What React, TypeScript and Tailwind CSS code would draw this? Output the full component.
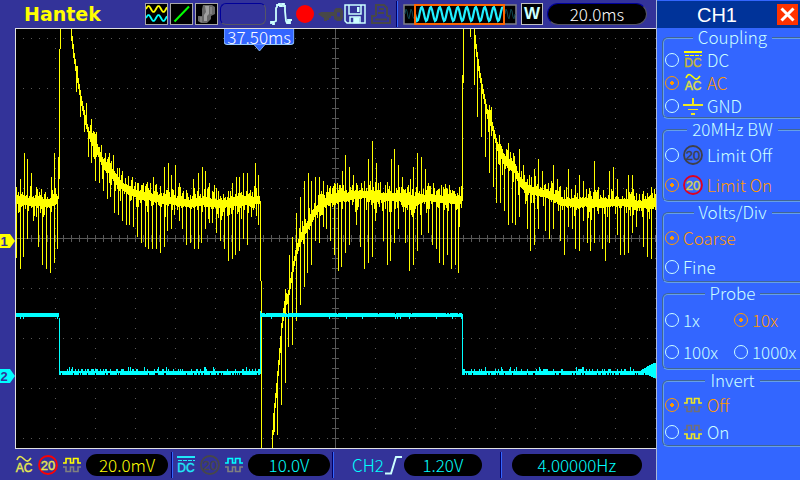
import { ReactNode, useState } from "react";

type Point = [number, number];

const YELLOW = "#ffff00";
const CYAN = "#00ffff";

// centre line of channel 1, one run between each pair of edges
const ch1Runs: Point[][] = [
  [[16, 200], [30, 201], [48, 203], [57, 200]],
  [[71, 29], [74, 55], [78, 80], [81, 98], [86, 122], [90, 136], [96, 145], [100, 156], [105, 166], [110, 167], [115, 179], [120, 184], [130, 191], [140, 195], [150, 196], [160, 199], [175, 201], [190, 203], [205, 201], [222, 204], [240, 201], [259, 200]],
  [[272, 448], [274, 415], [277, 385], [280, 350], [282, 325], [285, 303], [288, 298], [292, 274], [296, 252], [300, 240], [305, 230], [310, 222], [315, 211], [320, 206], [330, 199], [340, 197], [365, 194], [390, 197], [405, 196], [415, 200], [430, 197], [445, 199], [461, 200]],
  [[474, 29], [477, 54], [480, 75], [484, 96], [488, 116], [492, 124], [498, 148], [503, 157], [510, 165], [515, 169], [520, 182], [527, 188], [535, 191], [545, 193], [555, 197], [562, 202], [580, 202], [600, 203], [620, 202], [640, 204], [655, 203]],
];

const ch1Down: Point[] = [
  [16, 258], [20, 269], [23, 257], [27, 239], [33, 221], [38, 247], [42, 265], [46, 269], [50, 273], [54, 263], [57, 249],
  [76, 92], [80, 117], [84, 132], [88, 157], [91, 163], [95, 181], [99, 183], [103, 191], [107, 199], [110, 197], [114, 213], [118, 215], [122, 221], [126, 225], [129, 225], [133, 227], [137, 237],
  [141, 243], [145, 247], [148, 249], [152, 249], [156, 249], [160, 253], [164, 247], [167, 231], [171, 229], [179, 221], [182, 229], [186, 245], [190, 243], [194, 249], [198, 249],
  [201, 243], [205, 229], [209, 223], [212, 223], [216, 233], [220, 241], [224, 249], [228, 261], [232, 259], [235, 255], [239, 251], [243, 239], [247, 245], [251, 217], [258, 225],
  [274, 432], [277, 435], [281, 405], [285, 383], [288, 347], [292, 345], [296, 321], [300, 305], [304, 287], [307, 273], [311, 265], [315, 241], [319, 243], [323, 227], [326, 229], [330, 241],
  [334, 255], [338, 271], [341, 267], [345, 253], [349, 245], [356, 225], [360, 247], [364, 269], [368, 263], [372, 257], [375, 221], [383, 241], [387, 265], [390, 261], [394, 243], [398, 229],
  [405, 243], [409, 271], [413, 265], [417, 251], [421, 235], [428, 233], [432, 245], [436, 249], [439, 263], [443, 265], [447, 255], [451, 269], [455, 265], [458, 273], [459, 227],
  [474, 85], [477, 117], [481, 137], [485, 157], [489, 173], [493, 187], [496, 203], [500, 203], [504, 211], [508, 225], [512, 223], [515, 225], [519, 217], [527, 229], [530, 251], [534, 245],
  [538, 229], [545, 231], [549, 239], [553, 229], [560, 241], [564, 255], [568, 227], [572, 229], [575, 249], [579, 251], [583, 221], [587, 243], [590, 251], [594, 243], [602, 249], [605, 261],
  [609, 243], [617, 235], [620, 255], [624, 255], [628, 253], [632, 233], [636, 227], [643, 247], [647, 257], [651, 259],
];

const ch1Up: Point[] = [
  [20, 179], [24, 153], [27, 159], [31, 173], [51, 177], [54, 153], [58, 157],
  [77, 66], [86, 103], [91, 119], [109, 155], [113, 155], [132, 177], [153, 177], [164, 167], [168, 163], [171, 175], [175, 165], [179, 183], [193, 179], [198, 173], [202, 167], [205, 171],
  [209, 183], [214, 185], [232, 183], [236, 177], [239, 177], [243, 173], [247, 173], [255, 163], [258, 175],
  [285, 289], [289, 255], [292, 237], [296, 213], [300, 197], [304, 181], [308, 173], [311, 181], [315, 177], [319, 177], [323, 181], [327, 185], [334, 183], [342, 171], [345, 155], [349, 167],
  [353, 175], [364, 181], [368, 159], [372, 141], [376, 163], [391, 159], [394, 149], [398, 165], [402, 177], [410, 179], [413, 167], [417, 153], [421, 157], [425, 169], [433, 183], [449, 185], [459, 187],
  [470, 29], [491, 107], [508, 143], [513, 153], [519, 149], [523, 165], [534, 169], [538, 159], [542, 171], [553, 165], [557, 179], [568, 169], [575, 185], [579, 175], [583, 181], [594, 161],
  [598, 187], [609, 171], [613, 167], [617, 179], [628, 175], [632, 175], [643, 191], [651, 187],
];

// repeatable noise, 0..1
const noise = (n: number) => {
  const v = Math.sin(n * 12.9898) * 43758.5453;
  return v - Math.floor(v);
};

const level = (run: Point[], x: number) => {
  for (let i = 1; i < run.length; i++) {
    const [x0, y0] = run[i - 1];
    const [x1, y1] = run[i];
    if (x <= x1) return y0 + ((y1 - y0) * (x - x0)) / (x1 - x0);
  }
  return run[run.length - 1][1];
};

const column = (x: number, top: number, bottom: number) =>
  `M${x} ${Math.round(Math.max(29, top))}h1V${Math.round(Math.min(448, bottom))}h-1z`;

const buildCh1 = () => {
  const down = new Map(ch1Down);
  const up = new Map(ch1Up);
  let d = "";
  ch1Runs.forEach((run) => {
    for (let x = run[0][0]; x <= run[run.length - 1][0]; x++) {
      const y = level(run, x);
      const next = level(run, x + 1);
      const steep = Math.abs(next - y) > 3;
      const a = noise(x);
      const b = noise(x + 700);
      let top = Math.min(y, next) - (steep ? 2 : 3 + a * a * 12);
      let bottom = Math.max(y, next) + (steep ? 3 : 4 + b * b * b * 14);
      top = Math.min(top, up.get(x) ?? top);
      bottom = Math.max(bottom, down.get(x) ?? bottom);
      d += column(x, top, bottom);
    }
  });
  // edges
  d += column(58, 157, 199) + column(59, 49, 179) + column(60, 29, 49);
  d += column(260, 201, 281) + column(261, 281, 448);
  d += column(462, 75, 201) + column(463, 29, 83) + column(470, 29, 37);
  return d;
};

const buildCh2 = () => {
  let d = "";
  for (let x = 16; x < 656; x++) {
    const high = x < 59 || (x >= 260 && x < 462);
    const a = noise(x + 50);
    const b = noise(x + 99);
    if (high) d += column(x, a > 0.95 ? 314 : 313, b > 0.94 ? 319 : 317);
    else d += column(x, a > 0.95 ? 367 : a > 0.7 ? 369 : 371, b > 0.85 ? 373 : 375);
  }
  return d + column(59, 318, 375) + column(260, 311, 374) + column(462, 314, 375);
};

const buildGrid = () => {
  let d = "";
  const dot = (x: number, y: number) => (d += `M${x} ${y}h1v1h-1z`);
  for (let y = 38; y < 448; y += 50) for (let x = 23; x < 656; x += 8) dot(x, y);
  for (let x = 55; x < 656; x += 40) for (let y = 38; y < 448; y += 10) dot(x, y);
  for (let x = 23; x < 656; x += 8) d += `M${x} 235h1v7h-1z`;
  for (let y = 38; y < 448; y += 10) d += `M332 ${y}h7v1h-7z`;
  return d + "M16 238h640v1h-640zM335 29h1v419h-1z";
};

const ch1Path = buildCh1();
const ch2Path = buildCh2();
const gridPath = buildGrid();

const wave = (x0: number, x1: number, mid: number, amp: number, period: number) => {
  let d = "";
  for (let x = x0; x <= x1; x++)
    d += `${d ? "L" : "M"}${x} ${(mid - amp * Math.sin(((x - x0) * 2 * Math.PI) / period)).toFixed(1)}`;
  return d;
};

const CouplingIcon = ({ kind, color, label }: { kind: string; color: string; label?: string }) => (
  <svg width="20" height="22" viewBox="0 0 20 22" fill="none" stroke={color} className="shrink-0">
    {kind === "DC" && (
      <>
        <path d="M1 3h18" strokeWidth="2" />
        <path d="M2 6.500h17" strokeWidth="1" strokeDasharray="4 1" />
      </>
    )}
    {kind === "AC" && <path d="M3 6c2-5 4-4 7-1s4 3 7-1" strokeWidth="1.600" />}
    {kind === "GND" && (
      <>
        <path d="M0 10h20M10 3v7" strokeWidth="2" />
        <path d="M5 14.500h10" strokeWidth="1" />
        <path d="M8 19h4" strokeWidth="2" />
      </>
    )}
    {kind !== "GND" && (
      <text x="10" y="18" textAnchor="middle" fontSize="12" fontFamily="Liberation Sans, sans-serif" fill={label ?? color} stroke={label ?? color} strokeWidth="0.400">
        {kind}
      </text>
    )}
  </svg>
);

const LimitIcon = ({ ring, color }: { ring: string; color: string }) => (
  <svg width="20" height="20" viewBox="0 0 20 20" fill="none" className="shrink-0">
    <circle cx="10" cy="10" r="9" stroke={ring} strokeWidth="1.800" />
    <text x="10" y="14.500" textAnchor="middle" fontSize="13" fontFamily="Liberation Sans, sans-serif" fill={color} stroke={color} strokeWidth="0.400">
      20
    </text>
  </svg>
);

const InvertIcon = ({ top, bottom }: { top: string; bottom: string }) => (
  <svg width="20" height="16" viewBox="0 0 20 16" fill="none" strokeWidth="1.600" className="shrink-0">
    <path d="M1 6h3V1.500h4.500V6h3V1.500H16V6h3" stroke={top} />
    <path d="M1 10h3v4.500h4.500V10h3v4.500H16V10h3" stroke={bottom} />
  </svg>
);

const Tile = ({ children }: { children: ReactNode }) => (
  <div className="h-[22px] w-[23px] shrink-0 border border-[#a8a8a8] bg-black">{children}</div>
);

const Divider = () => <div className="h-[26px] w-0.5 shrink-0 border-l border-r border-l-[#000066] border-r-[#3366ff]" />;

const Pill = ({ className, children }: { className: string; children: ReactNode }) => (
  <div className={`flex h-[22px] shrink-0 items-center justify-center rounded-full bg-black ${className}`}>{children}</div>
);

const TopBar = () => (
  <header className="flex h-7 shrink-0 items-center pl-6">
    <h1 className="w-[121px] font-['DejaVu_Sans'] text-[19px] leading-5 font-bold text-[#ffff00]">Hantek</h1>
    <div className="flex gap-0.5">
      <Tile>
        <svg width="21" height="20" viewBox="0 0 21 20" fill="none" strokeWidth="1.800">
          <path d={wave(0, 21, 5, 3, 10)} stroke={YELLOW} />
          <path d={wave(0, 21, 14, 3, 10)} stroke={CYAN} />
        </svg>
      </Tile>
      <Tile>
        <svg width="21" height="20" viewBox="0 0 21 20">
          <path d="M3.500 17.500 18 2.500" stroke="#00ff00" strokeWidth="2" />
        </svg>
      </Tile>
      <Tile>
        <svg width="21" height="20" viewBox="0 0 21 20">
          <path d="M7 1h9l3 2v7l-4 2v3l-4 4H5l-3-2v-5h4V5z" fill="#686868" />
          <path d="M9 2h4v8l-2 2v5H8v-6l2-3z" fill="#a0a0a0" />
          <path d="M15 3v7M5 13v5" stroke="#8c8c8c" strokeWidth="1.500" />
        </svg>
      </Tile>
      <div className="h-[22px] w-[46px] shrink-0 rounded-md border border-t-[#000099] border-r-[#555566] border-b-[#555566] border-l-[#000099]" />
    </div>
    <div className="ml-1 flex items-center gap-1">
      <svg width="22" height="22" viewBox="0 0 22 22" fill="none" stroke="#ccffff" strokeWidth="1.800">
        <path d="M1 21v-2h2v2h1v-2l2-1V5l1-1V2h2V1h1v2h2V1h2v2h1v5l1 10 1 2h1v-3h1v3h1v-3h2v-1" />
      </svg>
      <svg width="18" height="18" viewBox="0 0 18 18">
        <circle cx="9" cy="9" r="9" fill="#ff0000" />
      </svg>
      <svg width="26" height="20" viewBox="0 0 26 20" fill="#484848">
        <path d="M0 10l3-2h13V6l2-2h5l2 3v7l-2 3h-4l-3-2v-3h-3v2h-2v2h-2v-2H9v3H6v-3l-2-1z" />
        <path d="M19 8.500h3v4h-3z" fill="#333399" />
      </svg>
    </div>
    <svg width="22" height="20" viewBox="0 0 22 20" fill="none" stroke="#ccffff" strokeWidth="1.500" className="shrink-0">
      <path d="M1 1h20v18H3l-2-2z" />
      <path d="M5 1v9h12V1" />
      <path d="M6 19v-6h10v6" />
      <path d="M10 14v4.500h4.500V14z" fill="#ccffff" />
      <path d="M13 3h2.500v5H13z" stroke="none" fill="#ccffff" />
    </svg>
    <svg width="22" height="22" viewBox="0 0 22 22" fill="none" stroke="#484848" strokeWidth="2" className="ml-1 shrink-0">
      <path d="M6 13V2h8l3 3v8" />
      <path d="M9 6h5M8 10h6" />
      <path d="M6 13H2v7h18v-7h-3" />
      <path d="M5 16.500h12" />
    </svg>
    <div className="ml-1">
      <Divider />
    </div>
    <svg width="115" height="21" viewBox="0 0 115 21" fill="none" className="ml-[5px] shrink-0">
      <rect x="1" y="1" width="112" height="19" fill="#000" stroke="#808088" strokeWidth="1.500" />
      <path d={wave(2, 11, 10, 5, 5)} stroke="#104850" />
      <path d={wave(102, 112, 10, 5, 5)} stroke="#104850" />
      <path d={wave(12, 100, 10, -7, 9)} stroke="#20f0ff" strokeWidth="2.200" />
      <rect x="12" y="1" width="89" height="19" stroke="#ff6600" strokeWidth="2" />
    </svg>
    <div className="ml-[3px] flex h-[22px] w-[22px] shrink-0 items-center justify-center border border-[#c0c0c0] bg-black font-['Liberation_Sans'] text-[17px] font-bold text-[#ccffff]">
      W
    </div>
    <Pill className="ml-1 w-[100px] border border-t-[#000099] border-r-[#555566] border-b-[#555566] border-l-[#000099] text-white">
      20.0ms
    </Pill>
  </header>
);

const ChannelMarker = ({ n, color, className }: { n: string; color: string; className: string }) => (
  <svg width="15" height="14" viewBox="0 0 15 14" className={`absolute left-0 ${className}`}>
    <path d="M0 0h10l5 7-5 7H0z" fill={color} />
    <text x="4" y="12" textAnchor="middle" fontSize="13" fontWeight="bold" fontFamily="Liberation Sans, sans-serif" fill="#333399">
      {n}
    </text>
  </svg>
);

const Screen = () => (
  <div className="flex min-h-0 flex-1">
    <div className="relative w-[15px] shrink-0">
      <ChannelMarker n="1" color={YELLOW} className="top-[49%]" />
      <ChannelMarker n="2" color={CYAN} className="top-[81%]" />
    </div>
    <main className="relative min-w-0 flex-1 border-y border-l border-[#e0e0e0] bg-black">
      <svg viewBox="16 29 640 419" preserveAspectRatio="none" shapeRendering="crispEdges" className="block h-full w-full">
        <path d={gridPath} fill="#585858" />
        <path d={ch1Path} fill={YELLOW} />
        <path d={ch2Path} fill={CYAN} />
        <path d="M656 363v15h-2l-13-7v-1l13-7z" fill={CYAN} />
      </svg>
      <div className="absolute top-0 left-[38%] flex -translate-x-1/2 flex-col items-center">
        <div className="flex h-4 w-[71px] items-center justify-center rounded-b border-x border-b border-[#99ccff] bg-[#3366ff] text-white">
          37.50ms
        </div>
        <svg width="12" height="7" viewBox="0 0 12 7" className="-mt-px">
          <path d="M0 0 6 7 12 0z" fill="#3366ff" stroke="#99ccff" strokeWidth="0.800" />
        </svg>
      </div>
    </main>
  </div>
);

const BottomBar = () => (
  <footer className="flex h-[31px] shrink-0 items-center pl-[14px]">
    <div className="flex items-center gap-1 text-[#ffff00]">
      <CouplingIcon kind="AC" color="#e8e850" />
      <LimitIcon ring="#ff0000" color="#e8e850" />
      <InvertIcon top={YELLOW} bottom="#808080" />
      <Pill className="w-[82px]">20.0mV</Pill>
    </div>
    <div className="mx-[3px]">
      <Divider />
    </div>
    <div className="flex items-center gap-1 text-[#00ffff]">
      <CouplingIcon kind="DC" color="#20e8f8" />
      <LimitIcon ring="#484848" color="#484848" />
      <InvertIcon top={CYAN} bottom="#808080" />
      <Pill className="w-[82px]">10.0V</Pill>
    </div>
    <div className="ml-0.5">
      <Divider />
    </div>
    <div className="ml-[18px] flex items-center text-[#00ffff]">
      <span>CH2</span>
      <svg width="20" height="20" viewBox="0 0 20 20" fill="none" stroke="#ccffff" strokeWidth="2">
        <path d="M1 18.500h6L12 2h6" />
      </svg>
      <Pill className="w-[78px]">1.20V</Pill>
    </div>
    <div className="mr-[10px] ml-[18px]">
      <Divider />
    </div>
    <Pill className="w-[130px] text-[#00ffff]">4.00000Hz</Pill>
  </footer>
);

type Option = { value: string; icon?: ReactNode };

const Group = ({ title, options, initial, rows, columns }: {
  title: string;
  options: Option[];
  initial: string;
  rows: string;
  columns?: string;
}) => {
  const [selected, setSelected] = useState(initial);

  return (
    <fieldset className="min-w-0 rounded-l-md border-2 border-r-0 border-[#66a0e8] pl-px [border-style:groove]">
      <legend className="mx-auto h-5 px-[5px] leading-[18px]">{title}</legend>
      <div className={`grid ${rows} ${columns ?? ""}`}>
        {options.map(({ value, icon }) => (
          <label
            key={value}
            className={`flex items-center gap-1 leading-5 whitespace-nowrap ${value === selected ? "text-[#ff9900]" : ""}`}
          >
            <input
              type="radio"
              name={title}
              checked={value === selected}
              onChange={() => setSelected(value)}
              className="h-[14px] w-[14px] shrink-0 appearance-none rounded-full border border-current checked:bg-[radial-gradient(circle,#ff9900_0_2px,transparent_2px)]"
            />
            {icon}
            <span>{value}</span>
          </label>
        ))}
      </div>
    </fieldset>
  );
};

const SideMenu = () => (
  <aside className="w-36 shrink-0 overflow-hidden border-l border-[#a8b8d8] bg-[#3366ff] text-[#ccffff]">
    <div className="flex h-7 items-center border-t border-[#3366ff] bg-[#003399] pr-0.5">
      <h2 className="flex-1 text-center font-['Liberation_Sans'] text-xl leading-6 font-normal text-white">CH1</h2>
      <button aria-label="Close" className="flex h-[21px] w-[21px] items-center justify-center bg-[#ff3300]">
        <svg width="15" height="15" viewBox="0 0 15 15" stroke="#fff" strokeWidth="3">
          <path d="M1.500 1.500l12 12M13.500 1.500l-12 12" />
        </svg>
      </button>
    </div>
    <div className="ml-[5px] flex flex-col gap-px">
      <Group
        title="Coupling"
        initial="AC"
        rows="auto-rows-[23px]"
        options={[
          { value: "DC", icon: <CouplingIcon kind="DC" color={YELLOW} label="#c8b830" /> },
          { value: "AC", icon: <CouplingIcon kind="AC" color={YELLOW} label="#e0e040" /> },
          { value: "GND", icon: <CouplingIcon kind="GND" color="#f0e820" /> },
        ]}
      />
      <Group
        title="20MHz BW"
        initial="Limit On"
        rows="auto-rows-[30px]"
        options={[
          { value: "Limit Off", icon: <LimitIcon ring="#404048" color="#404048" /> },
          { value: "Limit On", icon: <LimitIcon ring="#e00020" color="#d8d050" /> },
        ]}
      />
      <Group
        title="Volts/Div"
        initial="Coarse"
        rows="auto-rows-[29px]"
        options={[{ value: "Coarse" }, { value: "Fine" }]}
      />
      <Group
        title="Probe"
        initial="10x"
        rows="auto-rows-[32px]"
        columns="grid-cols-[69px_1fr]"
        options={[{ value: "1x" }, { value: "10x" }, { value: "100x" }, { value: "1000x" }]}
      />
      <Group
        title="Invert"
        initial="Off"
        rows="auto-rows-[27px]"
        options={[
          { value: "Off", icon: <InvertIcon top="#f0e820" bottom="#707078" /> },
          { value: "On", icon: <InvertIcon top="#707078" bottom="#f0e820" /> },
        ]}
      />
    </div>
  </aside>
);

export default function App() {
  return (
    <div className="flex h-screen overflow-hidden bg-[#333399] font-['Noto_Sans_CJK_SC',sans-serif] text-[17px] leading-5 font-light">
      <div className="flex min-w-0 flex-1 flex-col">
        <TopBar />
        <Screen />
        <BottomBar />
      </div>
      <SideMenu />
    </div>
  );
}
